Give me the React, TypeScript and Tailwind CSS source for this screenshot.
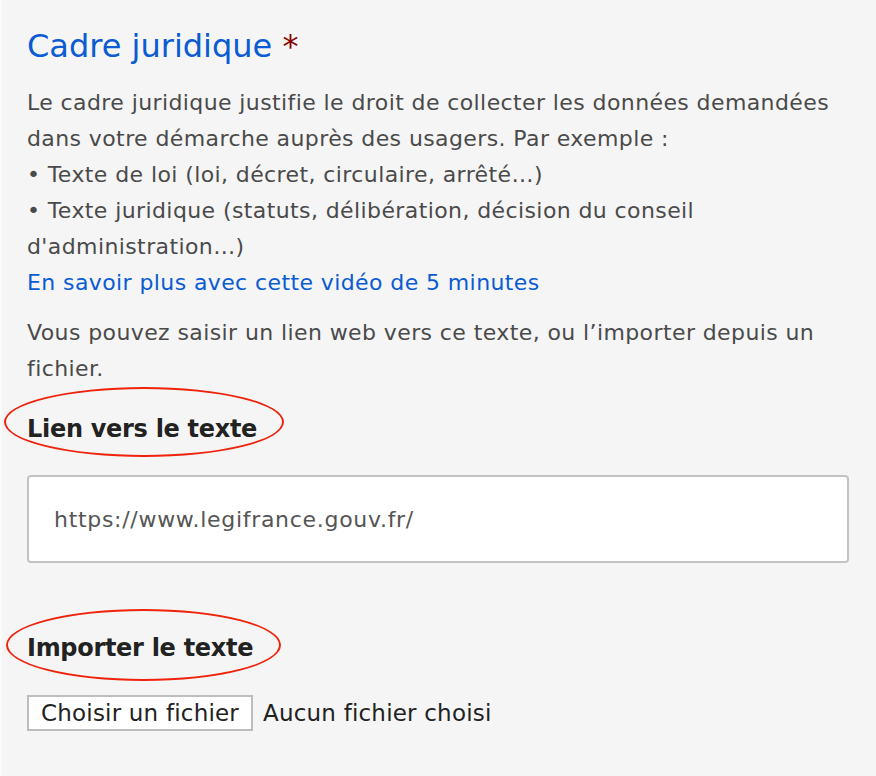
export default function App() {
  return (
    <div className="min-h-[776px] w-[876px] bg-[#f5f5f5] border-l-2 border-[#fbfbfb] pl-[25px] pr-[27px] pt-[24px] font-['DejaVu_Sans',sans-serif] text-[#4a4a4a]">
      <h2 className="text-[32px] leading-[44px] text-[#0b5bd3]">
        Cadre juridique <span className="text-[#8b0000]">*</span>
      </h2>
      <div className="mt-[17px] text-[22px] leading-[36px] tracking-[0.4px]">
        <p>
          Le cadre juridique justifie le droit de collecter les données demandées dans votre démarche
          auprès des usagers. Par exemple :
        </p>
        <p>• Texte de loi (loi, décret, circulaire, arrêté…)</p>
        <p>• Texte juridique (statuts, délibération, décision du conseil d'administration…)</p>
        <a className="block text-[#0b5bd3]" href="#">
          En savoir plus avec cette vidéo de 5 minutes
        </a>
        <p className="mt-[14px]">
          Vous pouvez saisir un lien web vers ce texte, ou l’importer depuis un fichier.
        </p>
      </div>

      <div className="relative mt-[24px] w-fit">
        <label className="block text-[24px] font-bold leading-[36px] tracking-[-0.3px] text-[#222]">
          Lien vers le texte
        </label>
        <div className="absolute left-[-23px] top-[-24px] h-[70px] w-[280px] rounded-[50%] border-[2.5px] border-[#f0220c]" />
      </div>
      <div className="mt-[28px] flex h-[88px] items-center rounded-[4px] border-2 border-[#c3c3c3] bg-white px-[25px] text-[22px] tracking-[0.7px] text-[#555]">
        https://www.legifrance.gouv.fr/
      </div>

      <div className="relative mt-[67px] w-fit">
        <label className="block text-[24px] font-bold leading-[36px] tracking-[-0.3px] text-[#222]">
          Importer le texte
        </label>
        <div className="absolute left-[-21px] top-[-21px] h-[72px] w-[275px] rounded-[50%] border-[2.5px] border-[#f0220c]" />
      </div>
      <div className="mt-[29px] flex items-center gap-[10px] text-[23px] tracking-[0.2px] text-[#222]">
        <button className="h-[36px] border-2 border-[#bdbdbd] bg-white px-[12px] leading-none">
          Choisir un fichier
        </button>
        <span>Aucun fichier choisi</span>
      </div>
    </div>
  );
}
